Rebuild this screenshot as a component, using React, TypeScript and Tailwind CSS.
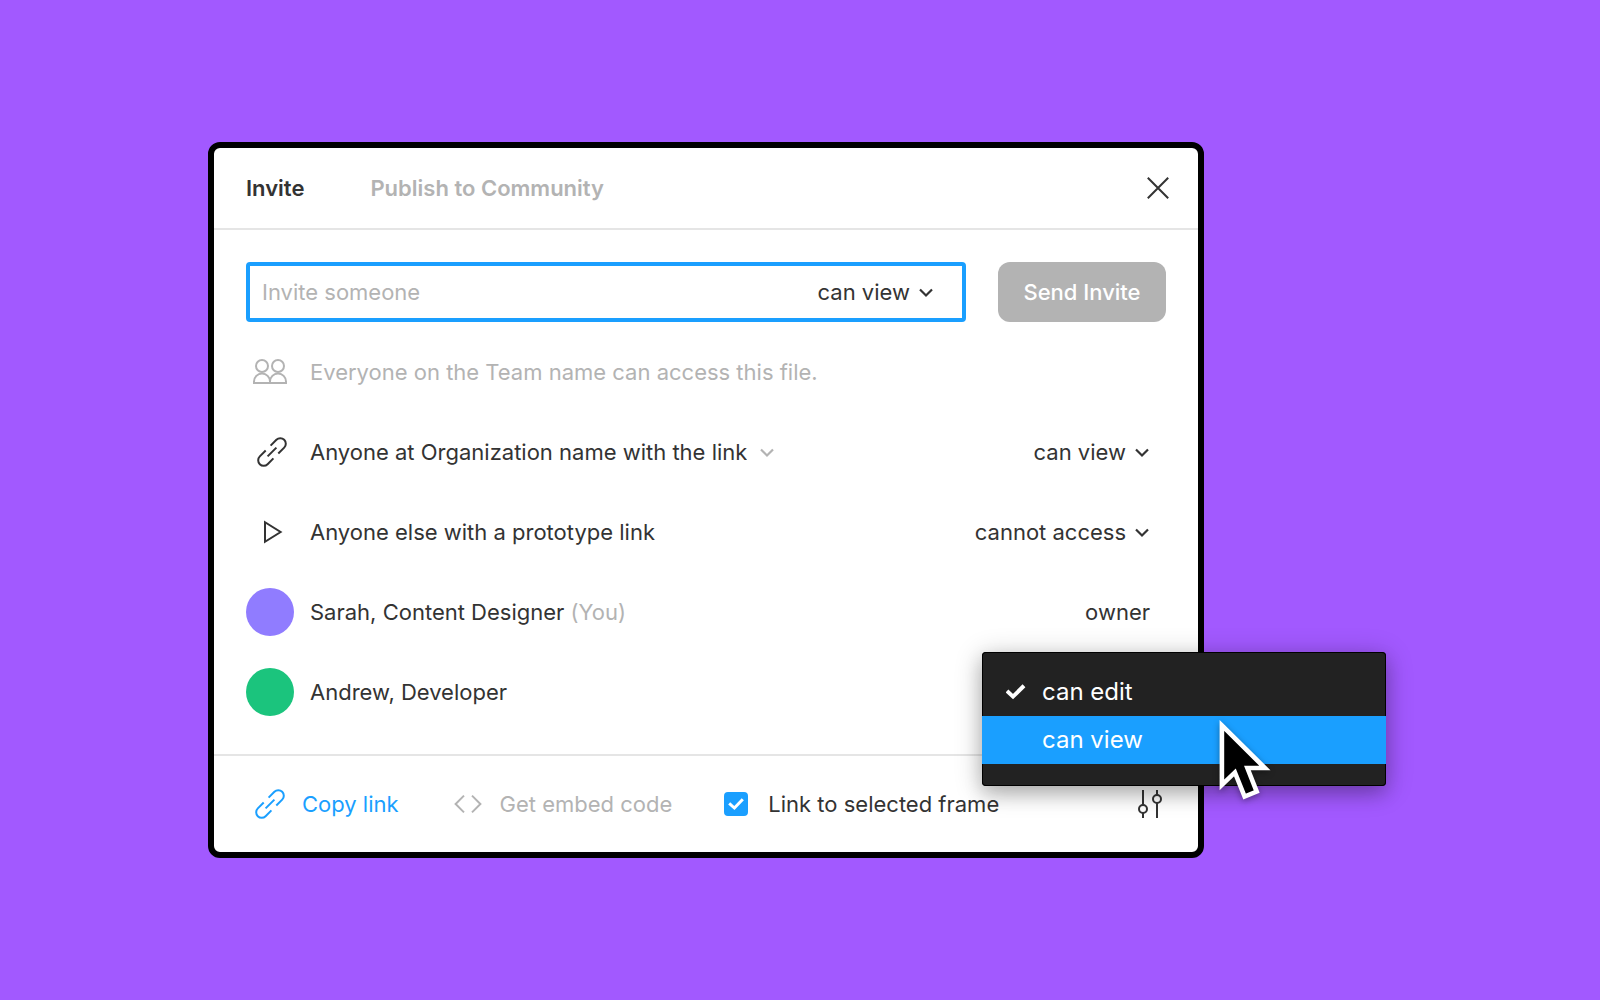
import { useState } from "react";
import type { ReactNode } from "react";

function LinkIcon({ className }: { className: string }) {
  return (
    <svg viewBox="0 0 32 32" fill="none" stroke="currentColor" strokeWidth="2" className={className} aria-hidden="true">
      <path d="M14.6 9.6 20.4 3.8A5.5 5.5 0 0 1 28.2 11.6L22.3 17.5M17.4 22.4 11.6 28.2A5.5 5.5 0 0 1 3.8 20.4L9.7 14.5M11.6 20.4 20.4 11.6" />
    </svg>
  );
}

function PeopleIcon() {
  return (
    <svg viewBox="0 0 48 48" fill="none" stroke="currentColor" strokeWidth="2" className="size-12" aria-hidden="true">
      <circle cx="16" cy="18" r="6" />
      <circle cx="32" cy="18" r="6" />
      <path d="M8 35v-1.5a8 8 0 0 1 16 0V35zM24 35v-1.5a8 8 0 0 1 16 0V35z" />
    </svg>
  );
}

function PlayIcon() {
  return (
    <svg viewBox="0 0 48 48" fill="none" stroke="currentColor" strokeWidth="2" className="size-12" aria-hidden="true">
      <path d="M19 14.2v19.6L34.6 24z" />
    </svg>
  );
}

function Chevron({ className = "" }: { className?: string }) {
  return (
    <svg viewBox="0 0 16 16" fill="none" stroke="currentColor" strokeWidth="2.2" className={`pointer-events-none size-4 shrink-0 ${className}`} aria-hidden="true">
      <path d="m2 5.5 6 6 6-6" />
    </svg>
  );
}

function Picker({ label, options, chevron }: { label: string; options: string[]; chevron?: string }) {
  return (
    <span className="flex items-center gap-2">
      <select aria-label={label} className="field-sizing-content appearance-none bg-transparent outline-none">
        {options.map((o) => (
          <option key={o}>{o}</option>
        ))}
      </select>
      <Chevron className={chevron} />
    </span>
  );
}

function Row({ icon, children, access }: { icon: ReactNode; children: ReactNode; access?: ReactNode }) {
  return (
    <li className="relative flex h-20 items-center gap-4 pr-4">
      <span className="flex size-12 shrink-0 items-center justify-center">{icon}</span>
      <div className="flex flex-1 items-center">{children}</div>
      {access}
    </li>
  );
}

function AccessMenu() {
  return (
    <div
      role="menu"
      className="absolute top-0 -right-[220px] z-10 w-[404px] rounded bg-[#222] pt-4 pb-[22px] text-2xl text-white shadow-[inset_0_0_0_1px_#000,0_4px_28px_rgba(0,0,0,0.24),0_8px_18px_rgba(0,0,0,0.18)]"
    >
      <button role="menuitemradio" aria-checked="true" className="flex h-12 w-full items-center gap-4 pl-6">
        <svg viewBox="0 0 20 20" fill="none" stroke="currentColor" strokeWidth="4" className="size-5" aria-hidden="true">
          <path d="m1 9 6 5.6L18 3.8" />
        </svg>
        can edit
      </button>
      <button role="menuitemradio" aria-checked="false" className="flex h-12 w-full items-center bg-[#1a9fff] pl-15">
        can view
      </button>
      <svg
        viewBox="0 0 70 100"
        className="pointer-events-none absolute top-[58px] left-[228px] w-[70px] drop-shadow-[0_2px_3px_rgba(0,0,0,0.35)]"
        aria-hidden="true"
      >
        <path d="M11.9 15.4 54.9 58H37.4L46.7 81.6 34.6 86.6 24.9 62.4 11.9 74.8z" fill="#000" stroke="#fff" strokeWidth="4.6" />
      </svg>
    </div>
  );
}

export default function App() {
  const [linked, setLinked] = useState(true);
  return (
    <main className="flex min-h-screen items-center bg-[#a259ff] pr-[396px] pl-52 font-['Inter',sans-serif] text-[22px] leading-8 text-[#333]">
      <section role="dialog" aria-label="Share" className="flex-1 rounded-xl border-6 border-black bg-white">
        <header className="flex h-[82px] items-center border-b-2 border-[#e5e5e5] px-8">
          <div role="tablist" className="flex flex-1 gap-[66px] font-semibold">
            <button role="tab" aria-selected="true">Invite</button>
            <button role="tab" aria-selected="false" className="text-[#b3b3b3]">Publish to Community</button>
          </div>
          <button aria-label="Close" className="-mr-2">
            <svg viewBox="0 0 32 32" fill="none" stroke="currentColor" strokeWidth="2" className="size-8" aria-hidden="true">
              <path d="m5.8 5.8 20.4 20.4M26.2 5.8 5.8 26.2" />
            </svg>
          </button>
        </header>

        <div className="px-8 pt-8 pb-[22px]">
          <form className="mb-2.5 flex gap-8" onSubmit={(e) => e.preventDefault()}>
            <div className="flex h-15 flex-1 items-center rounded border-4 border-[#1a9fff] pr-7 pl-3">
              <input
                aria-label="Invite someone"
                placeholder="Invite someone"
                className="min-w-0 flex-1 outline-none placeholder:text-[#b3b3b3]"
              />
              <Picker label="Invite access" options={["can view", "can edit"]} />
            </div>
            <button className="h-15 w-42 rounded-xl bg-[#b3b3b3] font-medium text-white">Send Invite</button>
          </form>

          <ul>
            <Row icon={<span className="text-[#b3b3b3]"><PeopleIcon /></span>}>
              <span className="text-[#b3b3b3]">Everyone on the Team name can access this file.</span>
            </Row>
            <Row
              icon={<LinkIcon className="ml-1 size-8" />}
              access={<Picker label="Link access" options={["can view", "can edit"]} />}
            >
              <Picker
                label="Link audience"
                options={["Anyone at Organization name with the link", "Only people invited to this file"]}
                chevron="ml-1 text-[#b3b3b3]"
              />
            </Row>
            <Row icon={<PlayIcon />} access={<Picker label="Prototype access" options={["cannot access", "can view"]} />}>
              Anyone else with a prototype link
            </Row>
            <Row icon={<span className="size-12 rounded-full bg-[#907cff]" />} access={<span>owner</span>}>
              <span>
                Sarah, Content Designer <span className="text-[#b3b3b3]">(You)</span>
              </span>
            </Row>
            <Row icon={<span className="size-12 rounded-full bg-[#1bc47d]" />} access={<AccessMenu />}>
              Andrew, Developer
            </Row>
          </ul>
        </div>

        <footer className="flex h-[98px] items-center border-t-2 border-[#e5e5e5] pr-8 pl-10">
          <button className="mr-[53px] flex items-center gap-4 text-[#1a9fff]">
            <LinkIcon className="size-8" />
            Copy link
          </button>
          <button className="mr-[52px] flex items-center gap-4 text-[#b3b3b3]">
            <svg viewBox="0 0 32 32" fill="none" stroke="currentColor" strokeWidth="2" className="size-8" aria-hidden="true">
              <path d="M12 7.6 3.6 16l8.4 8.4M20 7.6l8.4 8.4-8.4 8.4" />
            </svg>
            Get embed code
          </button>
          <label className="flex flex-1 items-center gap-5">
            <span className="grid size-6">
              <input
                type="checkbox"
                checked={linked}
                onChange={(e) => setLinked(e.target.checked)}
                className="col-start-1 row-start-1 size-6 appearance-none rounded border-2 border-[#1a9fff] checked:bg-[#1a9fff]"
              />
              <svg viewBox="0 0 24 24" fill="none" stroke="#fff" strokeWidth="3" className="pointer-events-none col-start-1 row-start-1 size-6" aria-hidden="true">
                <path d="m5.2 11.4 5.2 4.6L18.8 7.2" />
              </svg>
            </span>
            Link to selected frame
          </label>
          <button aria-label="Settings">
            <svg viewBox="0 0 32 32" fill="none" stroke="currentColor" strokeWidth="2" className="size-8" aria-hidden="true">
              <path d="M9 2v15M9 25v5M23 2v5M23 15v15" />
              <circle cx="9" cy="21" r="4" />
              <circle cx="23" cy="11" r="4" />
            </svg>
          </button>
        </footer>
      </section>
    </main>
  );
}
